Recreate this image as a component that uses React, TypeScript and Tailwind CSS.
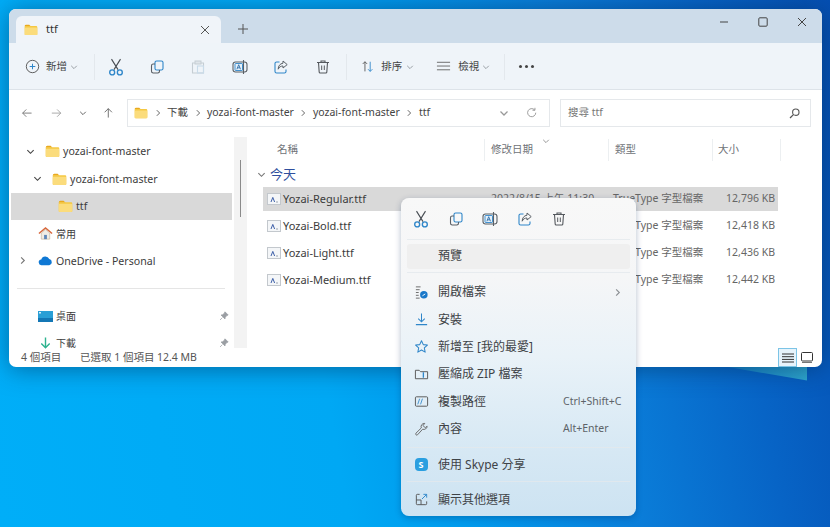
import React from "react";

const F = "font-['Noto_Sans','Noto_Sans_CJK_TC',sans-serif]";

const S = ({ s = 16, children, className = "" }: { s?: number; children: React.ReactNode; className?: string }) => (
  <svg width={s} height={s} viewBox="0 0 16 16" fill="none" className={"shrink-0 " + className}>{children}</svg>
);

const Folder = ({ w = 15 }: { w?: number }) => (
  <svg width={w} height={w * 0.85} viewBox="0 0 20 17" className="shrink-0">
    <path d="M1 3a2 2 0 0 1 2-2h4.500l2.500 2.500h-9z" fill="#e9a91f" />
    <rect x="1" y="3" width="18" height="13" rx="1.500" fill="#f5c842" />
    <rect x="1" y="5" width="18" height="11" rx="1.500" fill="#fbdc7c" />
  </svg>
);

const Scissors = () => (
  <S s={18}>
    <path d="M4 1 9.800 10.300M12 1 6.200 10.300" stroke="#4a4f55" strokeWidth="1" />
    <circle cx="4.600" cy="12.800" r="2.200" stroke="#2f86c9" strokeWidth="1.200" />
    <circle cx="11.400" cy="12.800" r="2.200" stroke="#2f86c9" strokeWidth="1.200" />
  </S>
);
const CopyI = () => (
  <S s={16}>
    <rect x="6" y="2" width="8" height="9" rx="1.600" stroke="#2f86c9" strokeWidth="1.100" />
    <path d="M6 5H4.200A1.700 1.700 0 0 0 2.500 6.700v5.600A1.700 1.700 0 0 0 4.200 14h4.600a1.700 1.700 0 0 0 1.700-1.700V11" stroke="#5a6066" strokeWidth="1.100" />
  </S>
);
const PasteI = () => (
  <S s={16}>
    <path d="M2.500 4h11v10h-11z" stroke="#c5cdd3" strokeWidth="1.100" />
    <rect x="5" y="2" width="6" height="3" fill="#dfe5ea" stroke="#c5cdd3" />
    <rect x="7.500" y="7" width="6" height="7" stroke="#c9dbe9" strokeWidth="1.100" />
  </S>
);
const RenameI = () => (
  <S s={16}>
    <rect x="1" y="3" width="14" height="10" rx="2.500" stroke="#5a6066" strokeWidth="1.100" />
    <rect x="3" y="4.500" width="7.500" height="7" rx=".6" stroke="#2f86c9" strokeWidth=".9" fill="#e6f1fa" />
    <path d="M4.900 10.300 6.700 5.700l1.800 4.600M5.500 8.800h2.400" stroke="#2f6ea8" strokeWidth=".9" />
    <path d="M11.500 1v14" stroke="#5a6066" strokeWidth="1.100" />
  </S>
);
const ShareI = () => (
  <S s={16}>
    <path d="M6.500 3H3.600A1.600 1.600 0 0 0 2 4.600v7.800A1.600 1.600 0 0 0 3.600 14h7.800a1.600 1.600 0 0 0 1.600-1.600V10.500" stroke="#2f86c9" strokeWidth="1.100" />
    <path d="M10 2l4.200 3.600L10 9V7C7.700 7 6.200 8 5.200 10.200 5.200 7 7 4.600 10 4.200z" stroke="#5a6066" strokeWidth="1" strokeLinejoin="round" />
  </S>
);
const TrashI = () => (
  <S s={16}>
    <path d="M2 3.500h12M6 3.500V2h4v1.500" stroke="#55595e" strokeWidth="1.100" />
    <path d="M3.500 3.500l.7 9.600a1 1 0 0 0 1 .9h5.600a1 1 0 0 0 1-.9l.7-9.600" stroke="#55595e" strokeWidth="1.100" />
    <path d="M6.700 6.500v4.500M9.300 6.500v4.500" stroke="#55595e" strokeWidth="1" />
  </S>
);
const Chev = ({ c = "#9aa0a6", s = 8 }: { c?: string; s?: number }) => (
  <svg width={s} height={s} viewBox="0 0 8 8" fill="none" className="shrink-0"><path d="M1.200 2.800 4 5.600l2.800-2.800" stroke={c} strokeWidth="1" /></svg>
);
const ChevR = ({ c = "#666", s = 8 }: { c?: string; s?: number }) => (
  <svg width={s} height={s} viewBox="0 0 8 8" fill="none" className="shrink-0"><path d="M2.800 1.200 5.600 4 2.800 6.800" stroke={c} strokeWidth="1" /></svg>
);
const TtfIcon = () => (
  <svg width="14" height="12" viewBox="0 0 14 12" className="shrink-0">
    <rect x=".5" y=".5" width="13" height="11" fill="#f4f6f8" stroke="#c3c8cd" />
    <path d="M4 9l1.800-4.600L7.600 9" stroke="#3d5fa8" strokeWidth="1" fill="none" />
    <path d="M9 9h2" stroke="#9aa4b0" strokeWidth="1" />
  </svg>
);
const Pin = () => (
  <svg width="10" height="10" viewBox="0 0 10 10" className="shrink-0">
    <path d="M6 .8 9.200 4 7.800 4.600 6.200 6.400 6 8 2 4l1.600-.2 1.800-1.600zM3.400 6.600 1 9" stroke="#9a9ea3" fill="#9a9ea3" strokeWidth=".7" />
  </svg>
);

const IB = ({ children }: { children: React.ReactNode }) => (
  <div className="w-[41.4px] flex justify-center items-center">{children}</div>
);
const Sep = () => <div className="w-px h-[26px] bg-[#e3e8ed]" />;

const files = [
  { n: "Yozai-Regular.ttf", s: "12,796 KB", sel: true },
  { n: "Yozai-Bold.ttf", s: "12,418 KB" },
  { n: "Yozai-Light.ttf", s: "12,436 KB" },
  { n: "Yozai-Medium.ttf", s: "12,442 KB" },
];

const Tree = ({ pl, chev, icon, label, sel, pin, cjk }: { pl: string; chev?: "d" | "r"; icon: React.ReactNode; label: string; sel?: boolean; pin?: boolean; cjk?: boolean }) => (
  <div className={"h-[27.3px] flex items-center " + pl + (sel ? " bg-[#d9d9d9]" : "")}>
    {chev === "d" && <div className="mr-[10px]"><Chev c="#444" s={9} /></div>}
    {chev === "r" && <div className="mr-[11px]"><ChevR c="#777" s={9} /></div>}
    {icon}
    <span className={"ml-[3px] text-[#3c3c3c] whitespace-nowrap leading-none " + (cjk ? "text-[10px]" : "text-[10.6px]")}>{label}</span>
    {pin && <div className="ml-auto mr-[3px]"><Pin /></div>}
  </div>
);

const Crumb = ({ t }: { t: string }) => <span className="text-[10.5px] text-[#444] whitespace-nowrap">{t}</span>;

const MenuRow = ({ icon, label, right, arrow }: { icon: React.ReactNode; label: string; right?: string; arrow?: boolean }) => (
  <div className="relative h-[27.4px] flex items-center pl-[11px] pr-[14px]">
    <div className="w-[18px] flex justify-center">{icon}</div>
    <span className="ml-[8px] text-[12px] text-[#3f4347] whitespace-nowrap">{label}</span>
    {right && <span className="absolute left-[162px] text-[10.5px] text-[#5d6368] whitespace-nowrap">{right}</span>}
    {arrow && <div className="ml-auto"><ChevR c="#8b8f93" s={9} /></div>}
  </div>
);
const MSep = () => <div className="h-px bg-[#e4e9ec]/80 mx-[6px]" />;

export default function App() {
  return (
    <div className={"relative w-[830px] h-[527px] overflow-hidden bg-[linear-gradient(80deg,#00aef8_0%,#00a8f4_38%,#009aec_50%,#0a7cd8_70%,#0764c6_85%,#054fb2_100%)] " + F}>
      <svg width="100" height="20" viewBox="0 0 100 20" className="absolute left-[712px] top-[365px]">
        <defs>
          <linearGradient id="tealWedge" x1="0" y1="0" x2="1" y2="0">
            <stop offset="0" stopColor="#1580c8" />
            <stop offset="1" stopColor="#2fa8cf" />
          </linearGradient>
        </defs>
        <polygon points="16,2 95,2 95,15.500" fill="url(#tealWedge)" />
      </svg>

      <div className="absolute left-[9px] top-[9px] w-[813px] h-[358px] rounded-[7px] overflow-hidden bg-white flex flex-col shadow-[0_2px_24px_rgba(0,40,80,0.5)]">
        {/* Title */}
        <div className="h-[34px] bg-[#cddcea] flex items-end pl-[7px] relative">
          <div className="w-[205px] h-[27px] bg-[#f0f4f9] rounded-t-[6px] flex items-center pl-[8px] pr-[11px]">
            <Folder w={14} />
            <span className="ml-[8px] text-[11px] text-[#333]">ttf</span>
            <svg width="10" height="10" viewBox="0 0 10 10" className="ml-auto"><path d="M1 1l8 8M9 1l-8 8" stroke="#555" strokeWidth="1" /></svg>
          </div>
          <svg width="10" height="10" viewBox="0 0 10 10" className="ml-[17px] mb-[9px]"><path d="M5 0v10M0 5h10" stroke="#555" strokeWidth="1" /></svg>
          <div className="ml-auto flex items-center self-start h-[25px] pr-[15px] gap-[29px]">
            <svg width="10" height="10" viewBox="0 0 10 10"><path d="M1 5h8" stroke="#444" strokeWidth="1.200" /></svg>
            <svg width="10" height="10" viewBox="0 0 10 10"><rect x=".8" y=".8" width="8.400" height="8.400" rx="1" fill="none" stroke="#444" strokeWidth="1" /></svg>
            <svg width="10" height="10" viewBox="0 0 10 10"><path d="M1 1l8 8M9 1l-8 8" stroke="#444" strokeWidth="1" /></svg>
          </div>
        </div>
        {/* Toolbar */}
        <div className="h-[47px] bg-[#eff4f9] border-b border-[#dde3e9] flex items-center pl-[16px] pt-[1px]">
          <div className="w-[69px] flex items-center">
            <S s={15}><circle cx="8" cy="8" r="6.600" stroke="#555" strokeWidth="1" /><path d="M8 5v6M5 8h6" stroke="#2f86c9" strokeWidth="1.100" /></S>
            <span className="ml-[6px] text-[10.5px] text-[#444]">新增</span>
            <div className="ml-[3px]"><Chev /></div>
          </div>
          <Sep />
          <IB><Scissors /></IB>
          <IB><CopyI /></IB>
          <IB><PasteI /></IB>
          <IB><RenameI /></IB>
          <IB><ShareI /></IB>
          <IB><TrashI /></IB>
          <div className="ml-[3px]"><Sep /></div>
          <div className="flex items-center ml-[14px] w-[75px]">
            <S s={14}><path d="M4.500 13V2M2 4.500 4.500 2 7 4.500" stroke="#555" strokeWidth="1" /><path d="M10.500 2v11M8 10.500 10.500 13l2.500-2.500" stroke="#2f86c9" strokeWidth="1" /></S>
            <span className="ml-[6px] text-[10.5px] text-[#444]">排序</span>
            <div className="ml-[4px]"><Chev /></div>
          </div>
          <div className="flex items-center w-[68px]">
            <S s={15}><path d="M1 3.500h14M1 7.500h14M1 11.500h14" stroke="#666" strokeWidth="1" /></S>
            <span className="ml-[7px] text-[10.5px] text-[#444]">檢視</span>
            <div className="ml-[3px]"><Chev /></div>
          </div>
          <Sep />
          <div className="ml-[14px] flex gap-[3px]">
            <div className="w-[3px] h-[3px] rounded-full bg-[#444]" /><div className="w-[3px] h-[3px] rounded-full bg-[#444]" /><div className="w-[3px] h-[3px] rounded-full bg-[#444]" />
          </div>
        </div>
        {/* Address row */}
        <div className="h-[47px] flex items-center pl-[11px] pr-[11px] pb-[1px]">
          <div className="flex items-center w-[107px]">
            <div className="w-[14px] flex justify-center"><S s={13}><path d="M13 7.500H2M6.500 3 2 7.500 6.500 12" stroke="#666" strokeWidth="1" /></S></div>
            <div className="ml-[16px] w-[14px] flex justify-center"><S s={13}><path d="M1 7.500h11M7.500 3 12 7.500 7.500 12" stroke="#999" strokeWidth="1" /></S></div>
            <div className="ml-[15px] w-[8px]"><Chev c="#666" /></div>
            <div className="ml-[15px] w-[14px] flex justify-center"><S s={13}><path d="M6.500 13V2M2 6.500 6.500 2 11 6.500" stroke="#555" strokeWidth="1" /></S></div>
          </div>
          <div className="w-[423px] h-[28px] border border-[#e5e8eb] flex items-center pl-[6px] pr-[10px]">
            <Folder w={14} />
            <div className="flex items-center ml-[5.5px] gap-[5.5px]">
              <ChevR /><Crumb t="下載" /><ChevR /><Crumb t="yozai-font-master" /><ChevR /><Crumb t="yozai-font-master" /><ChevR /><Crumb t="ttf" />
            </div>
            <div className="ml-auto flex items-center gap-[17px]">
              <Chev c="#999" s={10} />
              <S s={13}><path d="M12 7a5 5 0 1 1-1.500-3.600M11 1v3H8" stroke="#888" strokeWidth="1" /></S>
            </div>
          </div>
          <div className="ml-[10px] w-[251px] h-[28px] border border-[#e5e8eb] flex items-center pl-[7px] pr-[10px]">
            <span className="text-[10.5px] text-[#777]">搜尋 ttf</span>
            <svg width="11" height="11" viewBox="0 0 11 11" fill="none" className="ml-auto"><circle cx="6.800" cy="4.200" r="3.200" stroke="#555" strokeWidth="1.100" /><path d="M4.400 6.600 1 10" stroke="#555" strokeWidth="1.300" /></svg>
          </div>
        </div>
        {/* Content */}
        <div className="h-[211px] flex">
          <div className="w-[223px] shrink-0 pt-[1px] pl-[2px]">
            <Tree pl="pl-[15px]" chev="d" icon={<Folder w={15} />} label="yozai-font-master" />
            <Tree pl="pl-[22px]" chev="d" icon={<Folder w={15} />} label="yozai-font-master" />
            <Tree pl="pl-[47px]" icon={<Folder w={15} />} label="ttf" sel />
            <Tree pl="pl-[27px]" cjk icon={<S s={15}><path d="M1 8 8 2l7 6" stroke="#d9683c" strokeWidth="1.600" fill="none" /><path d="M3.500 7.500V14h9V7.500L8 3.600z" fill="#f0ece4" stroke="#b9a98f" strokeWidth=".6" /><rect x="6.500" y="9.500" width="3" height="4.500" fill="#5f87b8" /></S>} label="常用" />
            <Tree pl="pl-[7px]" chev="r" icon={<S s={15}><path d="M4 13a3 3 0 0 1-.5-6A4.500 4.500 0 0 1 12 6.500a3.300 3.300 0 0 1 0 6.500z" fill="#0f78d4" /></S>} label="OneDrive - Personal" />
            <div className="h-[28px] flex items-center"><div className="ml-[6px] w-[208px] h-px bg-[#e5e5e5]" /></div>
            <Tree pl="pl-[27px]" cjk icon={<svg width="15" height="11" viewBox="0 0 15 11" className="shrink-0"><rect width="15" height="11" fill="#2a9fd6" /><rect y="7" width="15" height="4" fill="#1477b5" /><rect x="1" y="1" width="2" height="1.500" fill="#d9f0fa" /></svg>} label="桌面" pin />
            <Tree pl="pl-[27px]" cjk icon={<S s={15}><path d="M8 1.500V12M3.500 8 8 12.500 12.500 8" stroke="#2fb38f" strokeWidth="1.500" fill="none" /></S>} label="下載" pin />
          </div>
          <div className="ml-[2px] w-[13px] bg-[#f3f3f3] shrink-0 pl-[5.5px] pt-[23px]">
            <div className="w-[1.5px] h-[57px] bg-[#8a8a8a]" />
          </div>
          <div className="flex-1 pl-[16px] min-w-0 relative">
            <div className="h-[23px] flex items-center text-[10.5px] text-[#6f7378] mt-[1px]">
              <div className="w-[221px] pl-[14px]">名稱</div>
              <div className="w-[124px] pl-[6px] h-[22px] flex items-center border-l border-[#eceff1] relative">修改日期
                <div className="absolute left-[57px] -top-[2px]"><Chev c="#999" s={8} /></div>
              </div>
              <div className="w-[104px] pl-[6px] h-[22px] flex items-center border-l border-[#eceff1]">類型</div>
              <div className="w-[69px] pl-[5px] h-[22px] flex items-center border-l border-r border-[#eceff1]">大小</div>
            </div>
            <div className="h-[25px] flex items-center -ml-[6px] mt-[1px]">
              <Chev c="#777" s={9} />
              <span className="ml-[4px] text-[13px] text-[#2f4f9e]">今天</span>
            </div>
            <div className="w-[515px]">
              {files.map((f) => (
                <div key={f.n} className={"flex items-center text-[11px] pl-[4px] pr-[3px] " + (f.sel ? "bg-[#d9d9d9] h-[24px] mb-[1.5px]" : "h-[27px]")}>
                  <TtfIcon />
                  <span className="ml-[2px] w-[208px] text-[#3c3c3c] whitespace-nowrap">{f.n}</span>
                  <span className="w-[122px] text-[#666] text-[10.5px] whitespace-nowrap">2022/8/15 上午 11:30</span>
                  <span className="w-[104px] text-[#666] text-[10.5px] whitespace-nowrap">TrueType 字型檔案</span>
                  <span className="ml-auto text-[#666] text-[10.5px] whitespace-nowrap">{f.s}</span>
                </div>
              ))}
            </div>
          </div>
        </div>
        {/* Status */}
        <div className="h-[19px] flex items-center pl-[12px] text-[10.5px] text-[#555] relative">
          <span className="w-[59px]">4 個項目</span>
          <span className="w-[77px]">已選取 1 個項目</span>
          <span>12.4 MB</span>
          <div className="ml-auto flex items-center h-full pr-[6px]">
            <div className="w-[19px] h-[19px] bg-[#e6f3fb] border border-[#7cc4e6] flex items-center justify-center">
              <svg width="12" height="10" viewBox="0 0 12 10"><path d="M0 1h12M0 3.700h12M0 6.400h12M0 9h12" stroke="#333" strokeWidth="1" /></svg>
            </div>
            <div className="w-[19px] flex justify-center">
              <svg width="12" height="11" viewBox="0 0 12 11"><rect x=".5" y=".5" width="11" height="8.500" rx="1" fill="none" stroke="#333" /><path d="M1 10.500h10" stroke="#777" /></svg>
            </div>
          </div>
        </div>
      </div>

      {/* Context menu */}
      <div className="absolute left-[401px] top-[198px] w-[235px] h-[318px] rounded-[8px] overflow-hidden bg-[linear-gradient(180deg,#f8f8f8_0%,#f5f6f7_25%,#e9f2f8_50%,#d6e8f4_80%,#cde3f2_100%)] shadow-[0_2px_6px_rgba(0,40,90,0.3)]">
        <div className="h-[41px] flex items-center pl-[3px]">
          {[<Scissors />, <CopyI />, <RenameI />, <ShareI />, <TrashI />].map((ic, i) => (
            <div key={i} className="w-[34.5px] flex justify-center">{ic}</div>
          ))}
        </div>
        <MSep />
        <div className="h-[32px] flex items-center px-[6px]">
          <div className="w-full h-[25px] bg-[#efefef] rounded-[3px] flex items-center pl-[31px] text-[12px] text-[#3f4347]">預覽</div>
        </div>
        <MSep />
        <div className="pt-[5.5px]">
          <MenuRow arrow label="開啟檔案" icon={<S s={15}><path d="M2 2h5M2 5h4M2 8h3M2 11h3M2 14h4" stroke="#666" strokeWidth="1" /><circle cx="10.500" cy="10.500" r="4" fill="#1a78c9" /><path d="M9 11.500 12 9.500" stroke="#fff" strokeWidth="1" /></S>} />
          <MenuRow label="安裝" icon={<S s={15}><path d="M8 1.500v9M4.500 7 8 10.500 11.500 7" stroke="#2f86c9" strokeWidth="1.100" /><path d="M2 13.500h12" stroke="#2f86c9" strokeWidth="1.200" /></S>} />
          <MenuRow label="新增至 [我的最愛]" icon={<S s={15}><path d="M8 1.800 9.900 6l4.400.5-3.300 3 .9 4.500L8 11.800 4.100 14l.9-4.500-3.300-3L6.100 6z" stroke="#2f86c9" strokeWidth="1.100" strokeLinejoin="round" /></S>} />
          <MenuRow label="壓縮成 ZIP 檔案" icon={<S s={15}><path d="M1.500 12.500v-9h4l1.500 1.500h7.500v7.500z" stroke="#555" strokeWidth="1" /><path d="M10 5.500v6" stroke="#2f86c9" strokeWidth="1.400" /></S>} />
          <MenuRow label="複製路徑" right="Ctrl+Shift+C" icon={<S s={15}><rect x="1.500" y="3" width="13" height="10" rx="1" stroke="#555" strokeWidth="1" /><path d="M4 11 6 5M7 11 9 5" stroke="#2f86c9" strokeWidth=".9" /></S>} />
          <MenuRow label="內容" right="Alt+Enter" icon={<S s={15}><path d="M14 4.500a3.500 3.500 0 0 1-4.800 3.200L3.800 13.600a1.200 1.200 0 0 1-1.700-1.700L7.800 6.300A3.500 3.500 0 0 1 11.500 1.500L9.500 3.800l2.500 2.200z" stroke="#666" strokeWidth="1" strokeLinejoin="round" /></S>} />
        </div>
        <div className="h-[4.5px]" />
        <MSep />
        <div className="h-[33px] flex items-center pl-[11px]">
          <div className="w-[18px] flex justify-center"><div className="w-[13px] h-[13px] rounded-[4px] bg-[#2a9fe0] flex items-center justify-center text-[9px] font-bold text-white leading-none">S</div></div>
          <span className="ml-[8px] text-[12px] text-[#3f4347]">使用 Skype 分享</span>
        </div>
        <MSep />
        <div className="h-[35px] flex items-center pl-[11px]">
          <div className="w-[18px] flex justify-center"><S s={15}><path d="M6 2.500H3.500a1 1 0 0 0-1 1v9a1 1 0 0 0 1 1h9a1 1 0 0 0 1-1V10M2.500 8.500h5v5" stroke="#555" strokeWidth="1" /><path d="M8.500 7.500 13.500 2.500M10 2.500h3.500V6" stroke="#2f86c9" strokeWidth="1" /></S></div>
          <span className="ml-[8px] text-[12px] text-[#3f4347]">顯示其他選項</span>
        </div>
      </div>
    </div>
  );
}
